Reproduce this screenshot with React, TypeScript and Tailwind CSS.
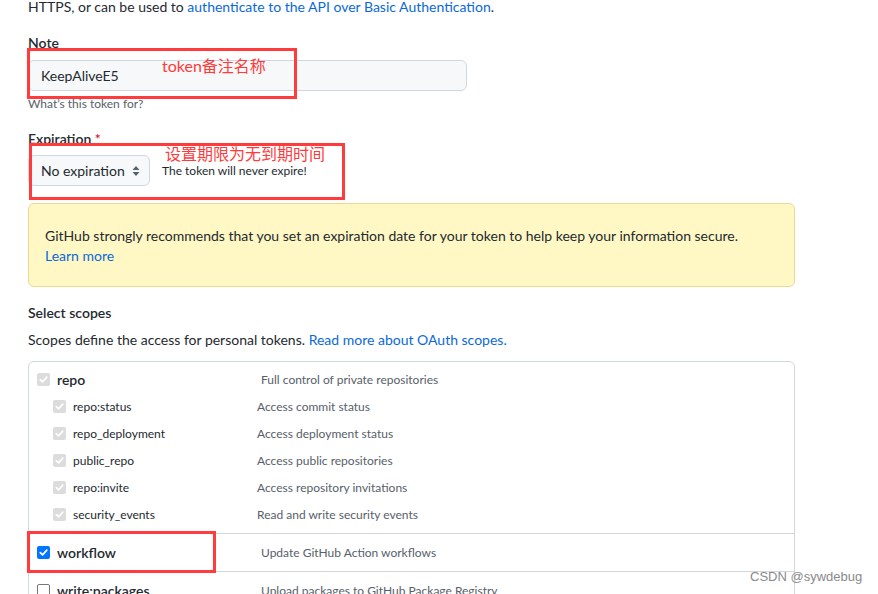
import React from "react";

const FONT = { fontFamily: 'Lato, "Noto Sans CJK SC", sans-serif' };

function DisabledCheck() {
  return (
    <span className="flex h-[13px] w-[13px] shrink-0 items-center justify-center rounded-[2px] bg-[#dcdcdc]">
      <svg width="11" height="11" viewBox="0 0 12 12">
        <path d="M2.5 6.2 L5 8.6 L9.6 3.4" fill="none" stroke="#ffffff" strokeWidth="1.8" strokeLinecap="round" strokeLinejoin="round" />
      </svg>
    </span>
  );
}

function CheckedBox() {
  return (
    <span className="flex h-[13px] w-[13px] shrink-0 items-center justify-center rounded-[2px] bg-[#0075ff]">
      <svg width="11" height="11" viewBox="0 0 12 12">
        <path d="M2.5 6.2 L5 8.6 L9.6 3.4" fill="none" stroke="#ffffff" strokeWidth="1.9" strokeLinecap="round" strokeLinejoin="round" />
      </svg>
    </span>
  );
}

function EmptyBox() {
  return <span className="h-[13px] w-[13px] shrink-0 rounded-[2px] border border-[#767676] bg-white" />;
}

const subs: [string, string][] = [
  ["repo:status", "Access commit status"],
  ["repo_deployment", "Access deployment status"],
  ["public_repo", "Access public repositories"],
  ["repo:invite", "Access repository invitations"],
  ["security_events", "Read and write security events"],
];

export default function App() {
  return (
    <div className="relative h-[594px] w-[878px] overflow-hidden bg-white text-[14px] text-[#24292f]" style={FONT}>
      <div className="flex w-[795px] flex-col pl-[28px]">
        <p className="-mt-[3px] leading-[20px]">
          HTTPS, or can be used to <span className="text-[#0969da]">authenticate to the API over Basic Authentication</span>.
        </p>

        <div className="mt-[16px] font-semibold leading-[20px]">Note</div>
        <div className="mt-[7px] flex h-[31px] w-[439px] items-center rounded-[6px] border border-[#d0d7de] bg-[#f6f8fa] pl-[12px]">
          KeepAliveE5
        </div>
        <div className="mt-[4px] text-[12px] leading-[18px] text-[#57606a]">What’s this token for?</div>

        <div className="mt-[16px] font-semibold leading-[20px]">
          Expiration <span className="text-[#cf222e]">*</span>
        </div>
        <div className="mt-[6px] flex items-center">
          <div className="flex h-[31px] w-[122px] items-center justify-between rounded-[6px] border border-[#d0d7de] bg-[#f6f8fa] pl-[12px] pr-[9px]">
            <span>No expiration</span>
            <svg width="8" height="12" viewBox="0 0 8 12">
              <path d="M4 1 L7.5 5 L0.5 5 Z" fill="#57606a" />
              <path d="M4 11 L7.5 7 L0.5 7 Z" fill="#57606a" />
            </svg>
          </div>
          <span className="ml-[12px] text-[12px] text-[#24292f]">The token will never expire!</span>
        </div>

        <div className="mt-[17px] flex h-[84px] flex-col justify-center rounded-[6px] border border-[#ecd98f] bg-[#fff8c5] px-[16px] pt-[1px]">
          <div className="leading-[20px]">
            GitHub strongly recommends that you set an expiration date for your token to help keep your information secure.
          </div>
          <div className="leading-[20px] text-[#0969da]">Learn more</div>
        </div>

        <div className="mt-[16px] font-semibold leading-[20px]">Select scopes</div>
        <div className="mt-[7px] leading-[20px]">
          Scopes define the access for personal tokens. <span className="text-[#0969da]">Read more about OAuth scopes.</span>
        </div>

        <div className="mt-[11px] flex h-[300px] flex-col rounded-t-[6px] border border-[#d0d7de]">
          <div className="flex flex-col pb-[5px] pt-[4px]">
            <div className="flex h-[27px] items-center pl-[8px]">
              <DisabledCheck />
              <span className="ml-[7px] w-[204px] font-semibold">repo</span>
              <span className="text-[12px] text-[#57606a]">Full control of private repositories</span>
            </div>
            {subs.map(([n, d]) => (
              <div key={n} className="flex h-[27px] items-center pl-[24px]">
                <DisabledCheck />
                <span className="ml-[7px] w-[184px] text-[12px]">{n}</span>
                <span className="text-[12px] text-[#57606a]">{d}</span>
              </div>
            ))}
          </div>
          <div className="flex h-[38px] items-center border-t border-[#d0d7de] pl-[8px]">
            <CheckedBox />
            <span className="ml-[7px] w-[204px] font-semibold">workflow</span>
            <span className="text-[12px] text-[#57606a]">Update GitHub Action workflows</span>
          </div>
          <div className="flex h-[38px] items-center border-t border-[#d0d7de] pl-[8px]">
            <EmptyBox />
            <span className="ml-[7px] w-[204px] font-semibold">write:packages</span>
            <span className="text-[12px] text-[#57606a]">Upload packages to GitHub Package Registry</span>
          </div>
        </div>
      </div>

      {/* annotations */}
      <div className="pointer-events-none absolute left-[27px] top-[48px] h-[51px] w-[270px] border-[3px] border-[#ff3b3b]" />
      <div className="absolute left-[162px] top-[55px] text-[16px] leading-[22px] text-[#ff3b3b]">token备注名称</div>
      <div className="pointer-events-none absolute left-[29px] top-[143px] h-[57px] w-[316px] border-[3px] border-[#ff3b3b]" />
      <div className="absolute left-[165px] top-[143px] text-[16px] leading-[22px] text-[#ff3b3b]">设置期限为无到期时间</div>
      <div className="pointer-events-none absolute left-[27px] top-[531px] h-[42px] w-[189px] border-[3px] border-[#ff3b3b]" />
      <div className="absolute left-[750px] top-[568px] text-[13px] leading-[18px] text-[#8a8a8a]" style={{ fontFamily: '"Liberation Sans", sans-serif' }}>
        CSDN @sywdebug
      </div>
    </div>
  );
}
